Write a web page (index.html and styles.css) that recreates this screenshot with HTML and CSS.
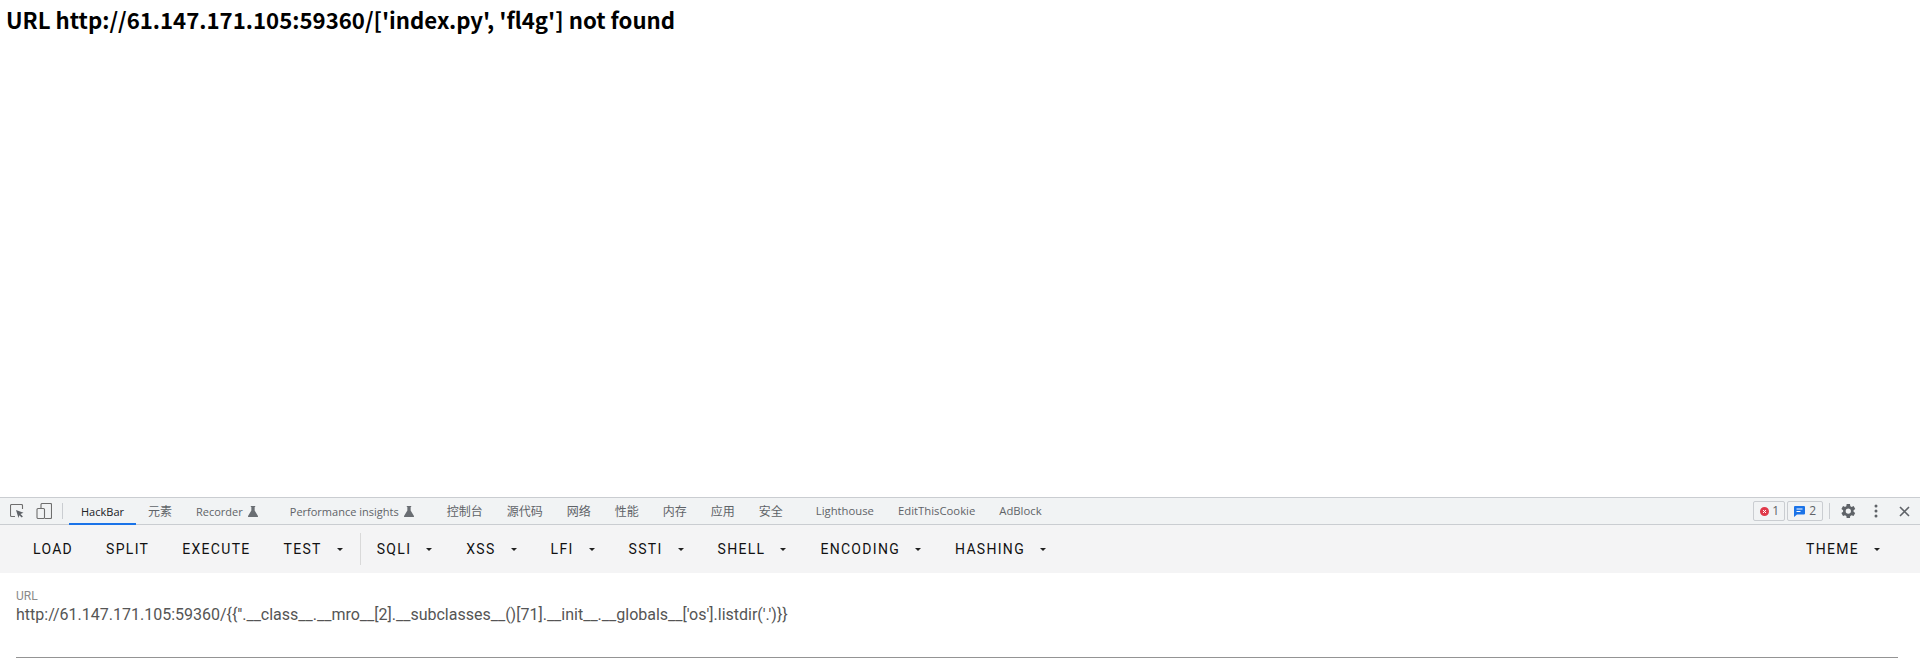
FILE: index.html
```html
<!DOCTYPE html>
<html lang="en">
<head>
<meta charset="utf-8">
<title>404</title>
<link rel="stylesheet" href="styles.css">
</head>
<body>
<main class="page"><h1 class="title">URL http://61.147.171.105:59360/['index.py', 'fl4g'] not found</h1></main>
<section class="devtools">
  <nav class="tabbar">
    <span class="tool-icon tool-first"><svg width="14" height="14" viewBox="0 0 14 14"><path d="M5 12.500H1.500a1 1 0 0 1-1-1V1.500a1 1 0 0 1 1-1h10a1 1 0 0 1 1 1V5" fill="none" stroke="#6e6e6e" stroke-width="1.100"/><path d="M6 6l7.500 2.800-3 1.200 2.400 2.400-1.200 1.200-2.400-2.400L8.500 14z" fill="#5f6368"/></svg></span>
    <span class="tool-icon tool-second"><svg width="16" height="16" viewBox="0 0 16 16"><path d="M5 5V1.500a1 1 0 0 1 1-1h8.500a1 1 0 0 1 1 1v13a1 1 0 0 1-1 1H9" fill="none" stroke="#6e6e6e" stroke-width="1.100"/><rect x="1" y="5.500" width="7.500" height="10" rx="1" fill="none" stroke="#6e6e6e" stroke-width="1.100"/></svg></span>
    <span class="vsep tools-sep"></span>
    <a class="tab active">HackBar</a>
    <a class="tab zh">元素</a>
    <a class="tab flask-tab">Recorder<svg class="flask" width="10" height="11" viewBox="0 0 9 10"><path d="M2.500 0h4v1H6v3l3 5.200V10H0v-.8L3 4V1h-.5z" fill="#6a6e73"/></svg></a>
    <a class="tab flask-tab flask-wide">Performance insights<svg class="flask" width="10" height="11" viewBox="0 0 9 10"><path d="M2.500 0h4v1H6v3l3 5.200V10H0v-.8L3 4V1h-.5z" fill="#6a6e73"/></svg></a>
    <a class="tab zh">控制台</a>
    <a class="tab zh">源代码</a>
    <a class="tab zh">网络</a>
    <a class="tab zh">性能</a>
    <a class="tab zh">内存</a>
    <a class="tab zh">应用</a>
    <a class="tab zh flask-tab flask-wide">安全</a>
    <a class="tab ext">Lighthouse</a>
    <a class="tab ext">EditThisCookie</a>
    <a class="tab ext">AdBlock</a>
    <span class="tab-status">
      <span class="badge badge-error"><svg width="9" height="9" viewBox="0 0 9 9"><circle cx="4.500" cy="4.500" r="4.500" fill="#e0394a"/><path d="M3 3l3 3M6 3L3 6" stroke="#fff" stroke-width="1"/></svg>1</span>
      <span class="badge"><svg width="11" height="11" viewBox="0 0 11 11"><path d="M1 0h9a1 1 0 0 1 1 1v6.500a1 1 0 0 1-1 1H3L0 11V1a1 1 0 0 1 1-1z" fill="#1a73e8"/><path d="M2.500 3h6M2.500 5.500h4" stroke="#fff" stroke-width="1"/></svg>2</span>
      <span class="vsep status-sep"></span>
      <span class="action"><svg width="18" height="18" viewBox="0 0 24 24"><path fill="#5f6368" fill-rule="evenodd" d="M19.400 13a7.600 7.600 0 0 0 0-2l2.300-1.800-2.200-3.800-2.700 1.100a7.700 7.700 0 0 0-1.700-1L14.600 2.600H10.200L9.800 5.500a7.700 7.700 0 0 0-1.700 1L5.400 5.400 3.200 9.200 5.500 11a7.600 7.600 0 0 0 0 2l-2.300 1.800 2.200 3.800 2.700-1.100a7.700 7.700 0 0 0 1.700 1l.4 2.900h4.400l.4-2.900a7.700 7.700 0 0 0 1.700-1l2.700 1.100 2.200-3.800zM12.400 15.500a3.500 3.500 0 1 1 0-7 3.500 3.500 0 0 1 0 7z"/></svg></span>
      <span class="action"><svg width="4" height="14" viewBox="0 0 4 14"><circle cx="2" cy="2" r="1.500" fill="#5f6368"/><circle cx="2" cy="7" r="1.500" fill="#5f6368"/><circle cx="2" cy="12" r="1.500" fill="#5f6368"/></svg></span>
      <span class="action action-close"><svg width="11" height="11" viewBox="0 0 11 11"><path d="M1 1l9 9M10 1l-9 9" stroke="#5f6368" stroke-width="1.600"/></svg></span>
    </span>
  </nav>
  <div class="toolbar">
    <button class="btn">LOAD</button>
    <button class="btn">SPLIT</button>
    <button class="btn">EXECUTE</button>
    <button class="btn menu">TEST<i class="caret"></i></button>
    <span class="tool-sep"></span>
    <button class="btn menu">SQLI<i class="caret"></i></button>
    <button class="btn menu">XSS<i class="caret"></i></button>
    <button class="btn menu">LFI<i class="caret"></i></button>
    <button class="btn menu">SSTI<i class="caret"></i></button>
    <button class="btn menu">SHELL<i class="caret"></i></button>
    <button class="btn menu">ENCODING<i class="caret"></i></button>
    <button class="btn menu">HASHING<i class="caret"></i></button>
    <button class="btn menu theme">THEME<i class="caret"></i></button>
  </div>
  <div class="field">
    <label class="field-label">URL</label>
    <div class="field-value">http://61.147.171.105:59360/{{''.__class__.__mro__[2].__subclasses__()[71].__init__.__globals__['os'].listdir('.')}}</div>
  </div>
</section>
</body>
</html>
```
FILE: styles.css
```css
* { box-sizing: border-box; }
html, body { height: 100%; }
body {
  margin: 0;
  display: flex;
  flex-direction: column;
  overflow: hidden;
  background: #fff;
}
.page { flex: 1; min-height: 0; }
.title {
  margin: 5px 0 0 6px;
  font: 700 22.2px/29px "Noto Sans CJK SC", "Noto Sans", sans-serif;
  color: #000;
}
.devtools { height: 162px; flex: none; }
.tabbar {
  height: 28px;
  display: flex;
  align-items: center;
  background: #f1f3f4;
  border-top: 1px solid #cacdd1;
  border-bottom: 1px solid #cacdd1;
  font: 11px/1 "Open Sans", "Noto Sans CJK SC", sans-serif;
  color: #5f6368;
}
.tool-icon { display: flex; }
.tool-first { margin-left: 10px; margin-right: 12px; }
.tool-second { margin-right: 10px; }
.vsep { width: 1px; height: 16px; background: #cacdd1; }
.tools-sep { margin-right: 6px; }
.tab {
  position: relative;
  height: 100%;
  padding: 0 12px;
  display: flex;
  align-items: center;
  white-space: nowrap;
}
.zh { font-family: "Noto Sans CJK SC", sans-serif; font-size: 12px; }
.ext { font-size: 11.3px; }
.active { color: #202124; }
.active::after {
  content: "";
  position: absolute;
  left: 0;
  right: 0;
  bottom: -1px;
  height: 2px;
  background: #1a73e8;
}
.flask { margin-left: 5px; }
.flask-tab { margin-right: 8px; }
.flask-wide { margin-right: 9px; }
.tab-status { margin-left: auto; display: flex; align-items: center; }
.badge {
  height: 20px;
  margin-left: 2px;
  padding: 0 6px;
  display: flex;
  align-items: center;
  gap: 4px;
  border: 1px solid #cacdd1;
  border-radius: 2px;
  font-size: 12px;
}
.badge-error { gap: 3px; padding-right: 5px; }
.status-sep { margin: 0 4px 0 6px; }
.action { width: 28px; display: flex; justify-content: center; }
.action-close { margin-right: 2px; }
.toolbar {
  height: 48px;
  padding: 0 0 0 17px;
  display: flex;
  align-items: center;
  background: #f4f4f5;
}
.btn {
  height: 36px;
  margin-right: 1px;
  padding: 0 16px;
  display: flex;
  align-items: center;
  border: 0;
  background: none;
  font: 400 14px/1 Roboto, sans-serif;
  letter-spacing: 1.3px;
  color: #111;
}
.menu { margin-right: 2px; }
.caret {
  width: 0;
  height: 0;
  margin-left: 15px;
  border: 3px solid transparent;
  border-top-color: #212121;
  border-bottom: 0;
}
.tool-sep { width: 1px; height: 32px; margin-left: -1px; background: #d9d9d9; }
.theme { margin-left: auto; margin-right: 24px; }
.field { margin: 0 22px 0 16px; height: 85px; padding-top: 16px; border-bottom: 1px solid #949494; }
.field-label { display: block; font: 12px/14px Roboto, sans-serif; color: #8a8a8a; }
.field-value { font: 16px/24px Roboto, sans-serif; color: #555; }
```
